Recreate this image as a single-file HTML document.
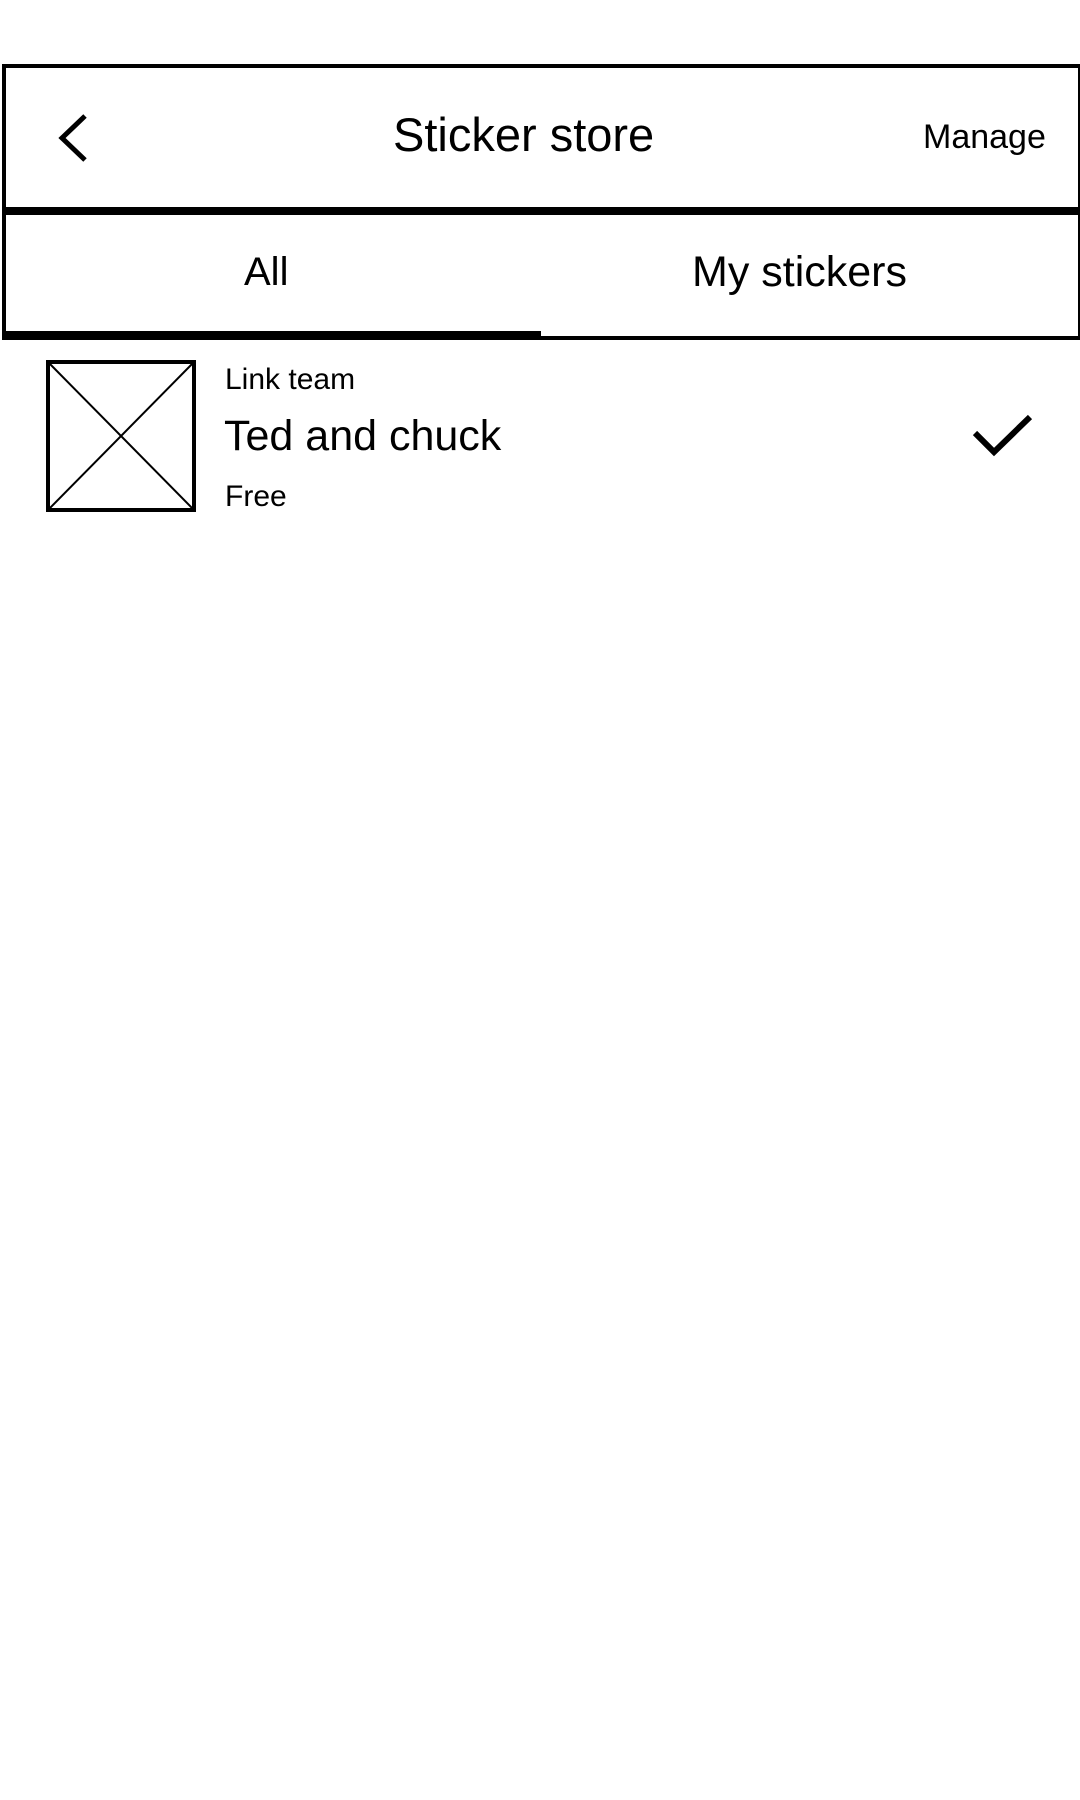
<!DOCTYPE html>
<html><head><meta charset="utf-8"><style>
body{margin:0;width:1080px;height:1800px;background:#fff;position:relative;font-family:"Liberation Sans",sans-serif;color:#000;overflow:hidden}
.a{position:absolute}
.t{position:absolute;white-space:nowrap;line-height:1}
</style></head><body>
<div class="a" style="left:2px;top:64px;width:1072px;height:143px;border:4px solid #000;border-bottom:none"></div>
<div class="a" style="left:2px;top:207px;width:1078px;height:8px;background:#000"></div>
<div class="a" style="left:2px;top:215px;width:1072px;height:125px;border-left:4px solid #000;border-right:4px solid #000"></div>
<div class="a" style="left:2px;top:336px;width:1078px;height:4px;background:#000"></div>
<div class="a" style="left:2px;top:331px;width:539px;height:9px;background:#000"></div>
<svg class="a" style="left:0;top:0" width="1080" height="600">
<polyline points="85,116 62,138 85,160" fill="none" stroke="#000" stroke-width="5"/>
<rect x="48" y="362" width="146" height="148" fill="none" stroke="#000" stroke-width="4"/>
<line x1="48" y1="362" x2="194" y2="510" stroke="#000" stroke-width="2"/>
<line x1="194" y1="362" x2="48" y2="510" stroke="#000" stroke-width="2"/>
<polyline points="975,433 994,452 1030,417" fill="none" stroke="#000" stroke-width="6"/>
</svg>
<div class="t" style="left:393px;top:111px;font-size:47px">Sticker store</div>
<div class="t" style="left:923px;top:120px;font-size:34px">Manage</div>
<div class="t" style="left:244px;top:252px;font-size:40px">All</div>
<div class="t" style="left:692px;top:251px;font-size:43px">My stickers</div>
<div class="t" style="left:225px;top:365px;font-size:30px">Link team</div>
<div class="t" style="left:224px;top:415px;font-size:43px">Ted and chuck</div>
<div class="t" style="left:225px;top:482px;font-size:30px">Free</div>
</body></html>
